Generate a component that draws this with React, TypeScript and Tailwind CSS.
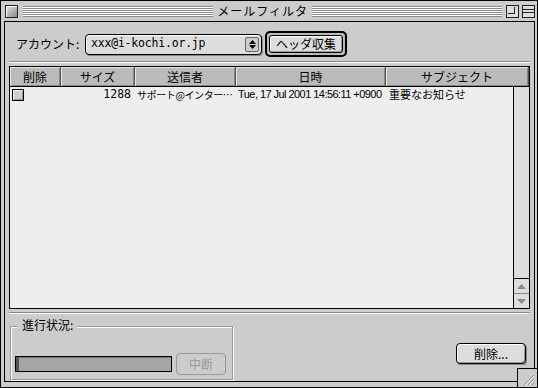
import React from 'react';

const jp = "font-['Noto_Sans_CJK_JP',sans-serif]";
const mono = "font-['DejaVu_Sans_Mono',monospace]";
const stripes =
  'bg-[repeating-linear-gradient(to_bottom,#8a8a8a_0px,#8a8a8a_1px,#ffffff_1px,#ffffff_2px)]';

function TitleBar() {
  return (
    <div className="flex h-[20px] items-center pl-[4px] pr-[2px]">
      <div className="h-[13px] w-[13px] border border-[#222] bg-[linear-gradient(135deg,#e0e0e0,#8c8c8c)] shadow-[inset_1px_1px_0_#fff]" />
      <div className={`ml-[5px] h-[11px] flex-1 ${stripes}`} />
      <div className={`${jp} px-[4px] text-[12px] leading-none tracking-[1px] text-black`}>メールフィルタ</div>
      <div className={`mr-[4px] h-[11px] flex-1 ${stripes}`} />
      <div className="relative h-[13px] w-[13px] border border-[#222] bg-[#ddd]">
        <div className="absolute left-[1px] top-[1px] h-[7px] w-[7px] border-b border-r border-[#222]" />
      </div>
      <div className="ml-[3px] flex h-[13px] w-[13px] flex-col justify-center gap-[2px] border border-[#222] bg-[#ddd]">
        <div className="h-px bg-[#222]" />
        <div className="h-px bg-[#222]" />
      </div>
    </div>
  );
}

function HeaderCell({ w, label, grow }: { w?: string; label: string; grow?: boolean }) {
  return (
    <div
      className={`${w ?? ''} ${grow ? 'flex-1' : ''} flex h-full items-center justify-center border-r border-[#555] bg-[#bbbbbb] shadow-[inset_1px_1px_0_#e6e6e6,inset_-1px_-1px_0_#888] ${jp} text-[12px] text-black`}
    >
      {label}
    </div>
  );
}

function Table() {
  return (
    <div className="mx-[4px] mt-[3px] flex h-[243px] flex-col border border-black bg-[#eeeeee]">
      <div className="flex h-[20px] border-b border-black">
        <HeaderCell w="w-[51px]" label="削除" />
        <HeaderCell w="w-[74px]" label="サイズ" />
        <HeaderCell w="w-[101px]" label="送信者" />
        <HeaderCell w="w-[150px]" label="日時" />
        <HeaderCell grow label="サブジェクト" />
      </div>
      <div className="flex flex-1">
        <div className="flex-1">
          <div className="flex h-[15px] items-center text-black">
            <div className="w-[51px] pl-[2px]">
              <div className="h-[12px] w-[12px] border border-black bg-[#cfcfcf] shadow-[inset_1px_1px_0_#f4f4f4,inset_-1px_-1px_0_#999]" />
            </div>
            <div className={`w-[74px] pr-[4px] text-right ${mono} text-[11.5px]`}>1288</div>
            <div className={`w-[101px] pl-[2px] ${jp} text-[10px] tracking-[-0.4px] whitespace-nowrap`}>
              サポート@インター…
            </div>
            <div className="w-[150px] pl-[2px] font-['Liberation_Sans',sans-serif] text-[11px] tracking-[-0.55px] whitespace-nowrap">
              Tue, 17 Jul 2001 14:56:11 +0900
            </div>
            <div className={`pl-[3px] ${jp} text-[11px]`}>重要なお知らせ</div>
          </div>
        </div>
        <div className="flex w-[16px] flex-col border-l border-black bg-[#dddddd]">
          <div className="flex-1" />
          <div className="flex h-[15px] items-center justify-center border-t border-black">
            <svg width="9" height="5" viewBox="0 0 9 5">
              <path d="M4.5 0 L9 5 L0 5 Z" fill="#8a8a8a" />
            </svg>
          </div>
          <div className="flex h-[15px] items-center justify-center border-t border-[#888]">
            <svg width="9" height="5" viewBox="0 0 9 5">
              <path d="M0 0 L9 0 L4.5 5 Z" fill="#8a8a8a" />
            </svg>
          </div>
        </div>
      </div>
    </div>
  );
}

function Separator() {
  return <div className="mx-[4px] h-[2px] border-t border-[#888] bg-white" />;
}

export default function App() {
  return (
    <div className="relative h-[388px] w-[538px] overflow-hidden border border-black bg-[#cccccc]">
      <TitleBar />
      <div className="ml-[3px] mr-[2px] flex h-[361px] flex-col border border-black bg-[#cccccc]">
        <div className="mt-[9px] flex h-[26px] items-center">
          <div className={`${jp} w-[80px] pl-[11px] text-[12px] text-black`}>アカウント:</div>
          <div className="flex h-[21px] w-[177px] items-center rounded-[4px] border border-black bg-[#dddddd] shadow-[inset_1px_1px_0_#fff,1px_1px_0_#888]">
            <div className={`${mono} flex-1 pl-[5px] text-[11.5px] tracking-[-0.2px] text-black`}>xxx@i-kochi.or.jp</div>
            <div className="mr-[2px] flex h-[15px] w-[14px] flex-col items-center justify-center gap-[1px] rounded-[2px] border border-[#666] bg-[#cccccc]">
              <svg width="7" height="4" viewBox="0 0 7 4"><path d="M3.5 0 L7 4 L0 4 Z" fill="#000" /></svg>
              <svg width="7" height="4" viewBox="0 0 7 4"><path d="M0 0 L7 0 L3.5 4 Z" fill="#000" /></svg>
            </div>
          </div>
          <div className="ml-[3px] flex h-[26px] w-[82px] items-center justify-center rounded-[5px] border-2 border-black bg-[#bbbbbb] p-[2px]">
            <div className={`flex h-full w-full items-center justify-center rounded-[3px] border border-black bg-[#dddddd] shadow-[inset_1px_1px_0_#fff,inset_-1px_-1px_0_#999] ${jp} text-[12px] text-black`}>
              ヘッダ収集
            </div>
          </div>
        </div>
        <div className="mt-[4px]">
          <Separator />
        </div>
        <Table />
        <div className="mt-[3px]">
          <Separator />
        </div>
        <div className="flex flex-1 items-start">
          <div className="relative ml-[5px] mt-[12px] h-[54px] w-[223px] border border-[#999] shadow-[inset_1px_1px_0_#fff,1px_1px_0_#fff]">
            <div className={`absolute -top-[10px] left-[7px] bg-[#cccccc] px-[4px] ${jp} text-[12px] leading-[16px] text-black`}>
              進行状況:
            </div>
            <div className="absolute left-[4px] top-[26px] flex items-center gap-[4px]">
              <div className="h-[16px] w-[157px] border border-black bg-[#a5a5a5] shadow-[inset_3px_0_0_#555,inset_0_1px_0_#777]" />
              <div className={`flex h-[22px] w-[50px] items-center justify-center rounded-[4px] border border-[#999] ${jp} text-[12px] text-[#999]`}>
                中断
              </div>
            </div>
          </div>
          <div className="flex-1" />
          <div className={`mr-[8px] mt-[29px] flex h-[21px] w-[70px] items-center justify-center rounded-[4px] border border-black bg-[#dddddd] shadow-[inset_1px_1px_0_#fff,inset_-1px_-1px_0_#999,1px_1px_0_#888] ${jp} text-[12px] text-black`}>
            削除...
          </div>
        </div>
      </div>
      <div className="absolute left-[516px] top-[367px] flex h-[20px] w-[21px] items-center justify-center border-l border-t border-black bg-[#cccccc]">
        <svg width="14" height="14" viewBox="0 0 14 14">
          <path d="M3 13 L13 3 M7 13 L13 7 M11 13 L13 11" stroke="#888" strokeWidth="1" />
          <path d="M4 13 L13 4 M8 13 L13 8" stroke="#fff" strokeWidth="1" />
        </svg>
      </div>
    </div>
  );
}
